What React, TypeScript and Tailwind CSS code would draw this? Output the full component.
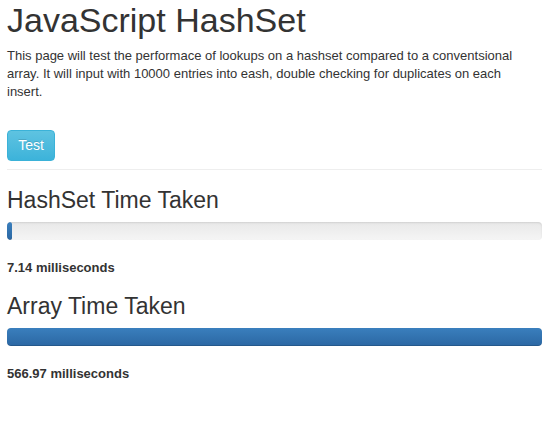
export default function App() {
  const results = [
    { label: "HashSet Time Taken", ms: 7.14, pct: 1 },
    { label: "Array Time Taken", ms: 566.97, pct: 100 },
  ];

  return (
    <div className="w-[550px] min-h-[426px] bg-white pl-[7px] pr-[8px] text-[#333] font-['Liberation_Sans',Arial,sans-serif]">
      <h1 className="pt-[2px] text-[34px] leading-[37px] font-normal">JavaScript HashSet</h1>
      <p className="mt-[8px] max-w-[517px] text-[13px] leading-[18px]">
        This page will test the performace of lookups on a hashset compared to a conventsional array. It will input with
        10000 entries into eash, double checking for duplicates on each insert.
      </p>

      <button className="mt-[29px] h-[31px] w-[48px] rounded-[4px] border border-[#3bb2d8] bg-gradient-to-b from-[#5ec3e1] to-[#3cb3da] text-[14px] text-white [text-shadow:0_-1px_0_rgba(0,0,0,0.15)]">
        Test
      </button>

      <hr className="mt-[8px] border-0 border-t border-[#eee]" />

      {results.map((r, i) => (
        <div key={r.label} className={i === 0 ? "mt-[18px]" : "mt-[16px]"}>
          <h2 className="text-[23px] leading-[25px] font-normal">{r.label}</h2>
          <div className="mt-[9px] h-[18px] overflow-hidden rounded-[4px] bg-gradient-to-b from-[#e8e8e8] to-[#f5f5f5] shadow-[inset_0_1px_2px_rgba(0,0,0,0.1)]">
            <div
              className="h-full min-w-[5px] rounded-[3px] bg-gradient-to-b from-[#3a7fbd] to-[#2b67a3] shadow-[inset_0_-1px_0_rgba(0,0,0,0.15)]"
              style={{ width: `${r.pct}%` }}
            />
          </div>
          <p className="mt-[18px] text-[13px] leading-[20px] font-bold">{r.ms} milliseconds</p>
        </div>
      ))}
    </div>
  );
}
